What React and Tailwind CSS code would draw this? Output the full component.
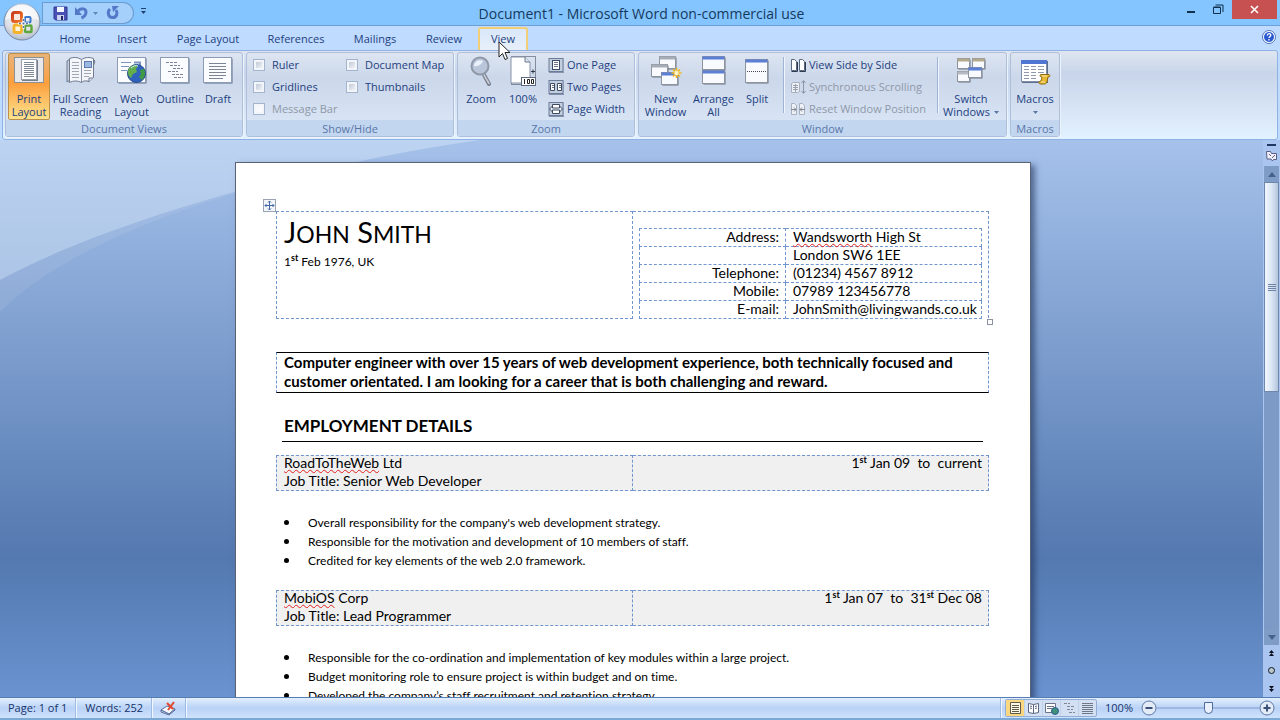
import React from "react";

const TABS = [
  ["Home", "w-[58px]"],
  ["Insert", "w-[56px]"],
  ["Page Layout", "w-[96px]"],
  ["References", "w-[80px]"],
  ["Mailings", "w-[78px]"],
  ["Review", "w-[60px]"],
];

function Sheet({ x = 2, y = 2, w = 28, h = 26 }) {
  return (
    <>
      <rect x={x + 1} y={y + 1} width={w} height={h} fill="#5f6f8a" />
      <rect x={x} y={y} width={w} height={h} fill="#fbfcff" stroke="#8b9ab5" />
    </>
  );
}

function Svg({ children, w = 32, h = 32 }) {
  return (
    <svg width={w} height={h} viewBox={`0 0 ${w} ${h}`} className="shrink-0" aria-hidden="true">
      {children}
    </svg>
  );
}

const PrintIcon = () => (
  <Svg>
    <rect x="1.5" y="3.5" width="29" height="25" fill="#e6e8ec" stroke="#8f9092" />
    <rect x="9" y="6" width="16" height="21" fill="#777f8c" />
    <rect x="8.5" y="5.5" width="15" height="20" fill="#fff" stroke="#98a0ae" />
    <path d="M11 8.500h10M11 10.500h10M11 12.500h10M11 14.500h10M11 16.500h10M11 18.500h10M11 20.500h10M11 22.500h10" stroke="#7f8793" />
  </Svg>
);
const ReadingIcon = () => (
  <Svg>
    <path d="M2 7l3-2v21l-3 2zM30 7l-2-2v18l-5 5z" fill="#c5ccd8" stroke="#6d7a90" />
    <path d="M4.500 4.500c4-1.500 8-1.500 12 1c4-2.500 8-2.500 12-1v19l-4 4c-3-1-6-1-8 1c-4-2-8-2-12 0z" fill="#f4f6fa" stroke="#6d7a90" />
    <path d="M16.500 6v22" stroke="#8490a6" />
    <path d="M7 8.500h7M7 11.500h7M7 14.500h7M7 17.500h7M7 20.500h7M7 23.500h7M19 16.500h7M19 19.500h7M19 22.500h5" stroke="#a0a8b6" />
    <rect x="19.5" y="7.5" width="7" height="6" fill="#9db8e0" stroke="#5a7ab0" />
    <path d="M24 28v-4h4" fill="#dfe5ee" stroke="#6d7a90" />
  </Svg>
);
const WebIcon = () => (
  <Svg>
    <Sheet x={1.5} y={3.5} w={28} h={25} />
    <path d="M5 8.500h10M5 12.500h8M5 16.500h6" stroke="#7d94bf" />
    <path d="M18 8.500h6v3" fill="none" stroke="#7d94bf" strokeWidth="2" />
    <circle cx="20.5" cy="19.5" r="9" fill="#2f62bd" stroke="#244a8c" />
    <path d="M13 14c3-3 7-4 9-2l-2 3 1 3-4 2-2 4c-3-2-4-6-2-10z" fill="#62ae4c" />
    <path d="M24 16l4-1c2 4 1 8-2 11l-3-3 2-3z" fill="#3f9a46" />
    <path d="M15 14c2-2 5-3 7-2" stroke="#d3ecff" fill="none" />
  </Svg>
);
const OutlineIcon = () => (
  <Svg>
    <Sheet x={1.5} y={3.5} w={28} h={25} />
    <path d="M7 8.500h12M11 11.500h10M14 14.500h10M9 17.500h10M13 20.500h12M15 23.500h9" stroke="#7b8597" strokeDasharray="3 1" />
  </Svg>
);
const DraftIcon = () => (
  <Svg>
    <Sheet x={1.5} y={3.5} w={28} h={25} />
    <path d="M7 9.500h17M7 12.500h17M7 15.500h17M7 18.500h17M7 21.500h17M7 24.500h14" stroke="#7d8593" />
  </Svg>
);
const ZoomIcon = () => (
  <Svg>
    <path d="M18 19l6 11" stroke="#7a8090" strokeWidth="4" strokeLinecap="round" />
    <path d="M18.500 20l5.500 9.500" stroke="#c9cdd6" strokeWidth="1.5" strokeLinecap="round" />
    <circle cx="15" cy="12" r="8.5" fill="#b9c6da" stroke="#8f98a8" strokeWidth="2" />
    <path d="M9 12a6 6 0 0 1 9-5c-1 3-5 6-9 5z" fill="#e9f0fa" />
  </Svg>
);
const HundredIcon = () => (
  <Svg>
    <rect x="4.5" y="2.5" width="24" height="28" fill="none" stroke="#30384a" strokeDasharray="1 1" />
    <path d="M4 3h14l5 5v21H4z" fill="#fff" stroke="#8792a6" />
    <path d="M18 3v5h5" fill="#dfe5ef" stroke="#6c788f" />
    <path d="M24 17.500h4M26 15.500v4" stroke="#30384a" />
    <rect x="14.5" y="23.5" width="14" height="8" fill="#fff" stroke="#5c6780" />
    <path d="M17.500 25v5M20.500 25.500h2v4h-2zM24.500 25.500h2v4h-2z" fill="none" stroke="#222" />
  </Svg>
);
const Tile = ({ children }) => (
  <Svg w={16} h={16}>
    <rect x="1" y="1.5" width="14" height="13" fill="#c3cfdf" stroke="#6b7c9a" />
    <path d="M1 15.500h15V2" fill="none" stroke="#8592ac" />
    {children}
  </Svg>
);
const OnePageIcon = () => (
  <Tile>
    <rect x="4.5" y="3.5" width="7" height="9" fill="#fff" stroke="#3d4a63" />
    <path d="M6 5.500h4M6 7.500h4M6 9.500h4" stroke="#6b7486" />
  </Tile>
);
const TwoPagesIcon = () => (
  <Tile>
    <path d="M2.500 4.500h4v7h-4zM9.500 4.500h4v7h-4z" fill="#fff" stroke="#3d4a63" />
    <path d="M4 6.500h2M4 8.500h2M11 6.500h2M11 8.500h2" stroke="#6b7486" />
  </Tile>
);
const PageWidthIcon = () => (
  <Tile>
    <path d="M4.500 3.500h7v9h-7z" fill="#fff" stroke="#3d4a63" />
    <path d="M1.500 8l3-3v2h7V5l3 3-3 3V9h-7v2z" fill="#e9eef7" stroke="#3d4a63" />
  </Tile>
);

function Win({ x, y, w, h, bar = "#5b7fd4" }) {
  return (
    <>
      <rect x={x + 1} y={y + 1} width={w} height={h} fill="#6c7482" />
      <rect x={x} y={y} width={w} height={h} fill="#f9fafd" stroke="#8e949e" />
      <rect x={x} y={y} width={w} height="3" fill={bar} />
    </>
  );
}
const NewWindowIcon = () => (
  <Svg>
    <Win x={9.5} y={2.5} w={16} h={12} bar="#a7adb8" />
    <Win x={1.5} y={10.5} w={16} h={12} bar="#a7adb8" />
    <Win x={11.5} y={18.5} w={16} h={12} />
    <path d="M26.500 14v10M21.500 19h10M23 15.500l7 7M30 15.500l-7 7" stroke="#f2b61c" strokeWidth="1.6" />
    <circle cx="26.5" cy="19" r="2.2" fill="#fff7c8" />
  </Svg>
);
const ArrangeIcon = () => (
  <Svg>
    <Win x={4.5} y={2.5} w={22} h={13} />
    <Win x={4.5} y={16.5} w={22} h={13} />
  </Svg>
);
const SplitIcon = () => (
  <Svg>
    <Win x={4.5} y={5.5} w={22} h={23} />
    <path d="M6 17.500h20" stroke="#40485a" strokeDasharray="1 1" />
  </Svg>
);
const SwitchIcon = () => (
  <Svg>
    <Win x={2.5} y={4.5} w={12} h={10} bar="#b3a98c" />
    <Win x={17.5} y={4.5} w={12} h={10} bar="#b3a98c" />
    <Win x={2.5} y={17.5} w={12} h={10} bar="#b5b9c1" />
    <Win x={13.5} y={13.5} w={13} h={10} />
  </Svg>
);
const MacrosIcon = () => (
  <Svg>
    <rect x="3" y="7" width="26" height="22" fill="#5f6f8a" />
    <rect x="2.5" y="6.5" width="25" height="21" fill="#fff" stroke="#7f8fae" />
    <rect x="2" y="6" width="26" height="4" fill="#4f76d2" />
    <path d="M5 12.500h5M12 12.500h5M19 12.500h6M5 15.500h5M12 15.500h5M19 15.500h6M5 18.500h5M12 18.500h5M19 18.500h6M5 21.500h5M12 21.500h5M5 24.500h5M12 24.500h5" stroke="#8f99ac" />
    <path d="M21.500 20.500h8.500c1.500 1 1 2.500-1 2.500l-1 5c-1 2-2 2-3 2h-4c-2-1-1-3 1-3l1-4c-2 0-2.500-1.500-1.500-2.500z" fill="#e5b733" stroke="#8f6c17" />
    <path d="M23 22h5M22 28h4" stroke="#fbe9a1" />
  </Svg>
);
const SideIcon = () => (
  <Svg w={16} h={16}>
    <path d="M1.500 2.500h3l2 2v9h-5zM9.500 2.500h3l2 2v9h-5z" fill="#fff" stroke="#5a6880" />
    <path d="M7.500 5v9.500h-6M15.500 5v9.500h-6" fill="none" stroke="#2f3b52" />
  </Svg>
);
const SyncIcon = () => (
  <Svg w={16} h={16}>
    <path d="M1.500 4.500l2-1h6v9l-2 1h-6z" fill="#edf0f5" stroke="#a9b0bd" />
    <path d="M3 6.500h5M3 8.500h5M3 10.500h5M5.500 5v8" stroke="#9aa2b1" />
    <path d="M13.500 2v12M11.500 4l2-2.500 2 2.500M11.500 12l2 2.500 2-2.500" fill="none" stroke="#8e96a5" />
  </Svg>
);
const ResetIcon = () => (
  <Svg w={16} h={16}>
    <path d="M1.500 2.500h3l2 2v9h-5zM9.500 2.500h3l2 2v9h-5z" fill="#eef1f6" stroke="#a9b0bd" />
    <path d="M1 8.500h5M4 6.500l2 2-2 2M15 8.500h-5M12 6.500l-2 2 2 2" fill="none" stroke="#7c8492" />
  </Svg>
);

function Group({ label, className, children }) {
  return (
    <section
      aria-label={label}
      className={`flex shrink-0 flex-col overflow-hidden rounded-[3px] border border-[#aebfdb] bg-linear-to-b from-[#dde5f1] via-[#cbd7ea] via-30% to-[#dce9f8] shadow-[1px_1px_0_#eaf3fe] ${className}`}
    >
      <div className="flex flex-1 px-0.5">{children}</div>
      <h2 className="h-4 bg-[#c2d6f0] text-center leading-[17px] text-[#5a76a8]">{label}</h2>
    </section>
  );
}

function Big({ icon, lines, className, active, arrow }) {
  return (
    <button
      type="button"
      aria-pressed={active}
      className={`flex h-[67px] shrink-0 flex-col items-center rounded-[2px] whitespace-nowrap ${
        active
          ? "border border-[#b98f4a] bg-linear-to-b from-[#e8b478] via-[#fb9f3c] via-45% to-[#fde38c]"
          : "border border-transparent"
      } ${className}`}
    >
      {icon}
      <span className="mt-1.5 flex flex-col text-center leading-[13px]">
        {lines.map((l, i) => (
          <span key={l}>
            {l}
            {arrow === "inline" && i === lines.length - 1 && <Caret />}
          </span>
        ))}
      </span>
      {arrow === "below" && (
        <svg width="5" height="3" viewBox="0 0 5 3" className="mt-1.5" aria-hidden="true">
          <path d="M0 0h5L2.500 3z" fill="#5c77a3" />
        </svg>
      )}
    </button>
  );
}

function Caret() {
  return (
    <svg width="5" height="3" viewBox="0 0 5 3" className="mb-0.5 ml-1 inline-block" aria-hidden="true">
      <path d="M0 0h5L2.500 3z" fill="#5c77a3" />
    </svg>
  );
}

function Small({ icon, children, disabled }) {
  return (
    <button
      type="button"
      disabled={disabled}
      className="flex h-[22px] items-center gap-[3px] whitespace-nowrap disabled:text-[#8f98a8]"
    >
      {icon}
      {children}
    </button>
  );
}

function Check({ children, disabled }) {
  return (
    <label className={`flex h-[22px] items-center gap-[7px] whitespace-nowrap ${disabled ? "text-[#8f98a8]" : ""}`}>
      <input
        type="checkbox"
        disabled={disabled}
        className="size-3 shrink-0 appearance-none border border-[#a3b4cc] bg-linear-to-br from-[#b5bfcf] to-[#fcfdff] shadow-[inset_0_0_0_2px_#f2f5fa] checked:bg-[#5b7fd4] disabled:from-[#f2f4f8]"
      />
      {children}
    </label>
  );
}

function Rule() {
  return <div className="my-1 h-14 w-px shrink-0 bg-[#9fb4d4] shadow-[1px_0_0_#eef5ff]" />;
}

function OfficeLogo() {
  return (
    <svg width="38" height="38" viewBox="0 0 38 38" aria-hidden="true">
      <defs>
        <radialGradient id="orb" cx=".5" cy=".3" r=".8">
          <stop offset="0" stopColor="#fdfdfe" />
          <stop offset=".6" stopColor="#dcdfe6" />
          <stop offset="1" stopColor="#9eabc0" />
        </radialGradient>
        <linearGradient id="ember" x1="0" y1="0" x2="1" y2="1">
          <stop offset="0" stopColor="#c93a1c" />
          <stop offset="1" stopColor="#f07a2a" />
        </linearGradient>
      </defs>
      <circle cx="19" cy="19" r="18" fill="url(#orb)" stroke="#7487a5" />
      <path d="M2.500 17a16.500 16.500 0 0 1 33 0c-8-3-25-3-33 0z" fill="#fff" opacity=".6" />
      <rect x="9.5" y="9.5" width="9" height="9" rx="2" fill="#f7e9e2" stroke="url(#ember)" strokeWidth="3" />
      <rect x="22" y="14" width="5.5" height="5.5" rx="1" fill="none" stroke="#3c79c9" strokeWidth="2" />
      <rect x="11" y="22" width="7.5" height="7.5" rx="1.5" fill="#fff6da" stroke="#f4b32a" strokeWidth="2.8" />
      <rect x="22" y="22.5" width="6.5" height="6.5" rx="1" fill="none" stroke="#5ca63b" strokeWidth="2.4" />
      <path d="M15 20.500h11M20.500 15v11" stroke="#fff" strokeWidth="2" />
      <path d="M16 20.500h10M20.500 16v10" stroke="#5a6fa3" strokeWidth="1.5" strokeDasharray="2 1.500" />
    </svg>
  );
}

function TitleBar() {
  return (
    <header className="flex h-[26px] items-start border-b border-[#6f9fd8] bg-[#84c5ff] pr-[3px] pl-1.5">
      <div className="flex h-full flex-1 basis-0 items-start">
        <div className="mt-0.5 ml-9 flex h-[22px] w-[92px] items-center rounded-tl-[4px] rounded-r-full border border-[#6c9bd0] bg-[#a5d0fb] pl-2.5">
          <button type="button" aria-label="Save">
            <svg width="15" height="15" viewBox="0 0 15 15">
              <path d="M1 1h13v13H2.500L1 12.500z" fill="#4a51b5" stroke="#2e3690" />
              <rect x="4" y="1" width="7" height="5" fill="#f4f6ff" />
              <rect x="4" y="9" width="7" height="5" fill="#cdd3ee" />
              <rect x="8" y="10" width="2" height="4" fill="#20285f" />
            </svg>
          </button>
          <button type="button" aria-label="Undo" className="ml-1.5">
            <svg width="15" height="14" viewBox="0 0 15 14">
              <path d="M4 5c3-3.500 8-2.500 8 1 0 3-2 5-4.500 6" fill="none" stroke="#5478c8" strokeWidth="3" />
              <path d="M1 1v8h7z" fill="#5478c8" />
            </svg>
          </button>
          <button type="button" aria-label="Undo history" className="ml-1">
            <svg width="5" height="3" viewBox="0 0 5 3">
              <path d="M0 0h5L2.500 3z" fill="#5b86c0" />
            </svg>
          </button>
          <button type="button" aria-label="Repeat" className="ml-2">
            <svg width="14" height="14" viewBox="0 0 14 14">
              <path d="M4 3C1 6 2 11.500 6.500 11.500S12 7 10 4" fill="none" stroke="#5478c8" strokeWidth="3" />
              <path d="M6 0h7l-6 6z" fill="#5478c8" />
            </svg>
          </button>
        </div>
        <button type="button" aria-label="Customize Quick Access Toolbar" className="mt-2 ml-[7px]">
          <svg width="5" height="6" viewBox="0 0 5 6">
            <path d="M0 .5h5" stroke="#22406e" />
            <path d="M0 3h5L2.500 6z" fill="#22406e" />
          </svg>
        </button>
      </div>
      <h1 className="text-[14px] leading-[27px] whitespace-nowrap text-[#15395c]">
        Document1 - Microsoft Word non-commercial use
      </h1>
      <div className="flex flex-1 basis-0 items-start justify-end">
        <button type="button" aria-label="Minimize" className="flex h-[19px] w-[26px] items-center justify-center">
          <svg width="9" height="9" viewBox="0 0 9 9">
            <path d="M0 7h8" stroke="#0f2f4d" strokeWidth="2" />
          </svg>
        </button>
        <button type="button" aria-label="Restore" className="flex h-[19px] w-[28px] items-center justify-center">
          <svg width="11" height="11" viewBox="0 0 11 11" fill="none" stroke="#0f2f4d">
            <path d="M.5 3.500h7v6h-7zM.5 3h7M2.500 1h7.500v7" />
          </svg>
        </button>
        <button type="button" aria-label="Close" className="flex h-[19px] w-[45px] items-center justify-center bg-[#c75050]">
          <svg width="9" height="9" viewBox="0 0 9 9">
            <path d="M1 1l7 7M8 1L1 8" stroke="#fff" strokeWidth="1.6" />
          </svg>
        </button>
      </div>
    </header>
  );
}

function TabBar() {
  return (
    <nav className="flex h-6 items-end bg-[#bfdbff] pr-1 pl-[46px]">
      <div className="flex flex-1">
        {TABS.map(([label, width]) => (
          <button key={label} type="button" className={`h-[23px] shrink-0 pt-0.5 whitespace-nowrap ${width}`}>
            {label}
          </button>
        ))}
        <button
          type="button"
          aria-current="page"
          className="relative ml-1 h-[23px] w-[50px] rounded-t-[3px] border-x-2 border-t-2 border-[#f0cf78] bg-linear-to-b from-[#d9e8fb] to-[#e8effa]"
        >
          View
          <svg width="14" height="20" viewBox="0 0 14 20" className="absolute top-3 left-[18px] z-20" aria-hidden="true">
            <path d="M1 1v15l3.500-3.500L7 18.500l2.500-1-2.500-6h5z" fill="#fff" stroke="#222" />
          </svg>
        </button>
      </div>
      <button type="button" aria-label="Help" className="mb-1.5">
        <svg width="14" height="14" viewBox="0 0 14 14">
          <circle cx="7" cy="7" r="6.5" fill="#fff" stroke="#4c74c0" />
          <circle cx="7" cy="7" r="5" fill="#2c5bd0" />
          <path d="M5.300 5.500c0-2.400 3.500-2.400 3.500-.3C8.800 6.500 7 6.500 7 8M7 9v1.500" fill="none" stroke="#fff" strokeWidth="1.3" />
        </svg>
      </button>
    </nav>
  );
}

function Ribbon() {
  return (
    <div className="bg-[#bfdbff] px-0.5">
      <div className="flex h-[90px] gap-[3px] rounded-[3px] border border-[#8db2e3] bg-linear-to-b from-[#dfe6f1] via-[#c8d5ea] via-25% to-[#e3f2ff] px-0.5 pt-px pb-0.5">
        <Group label="Document Views" className="w-[238px]">
          <Big active icon={<PrintIcon />} lines={["Print", "Layout"]} className="w-[42px]" />
          <Big icon={<ReadingIcon />} lines={["Full Screen", "Reading"]} className="w-[61px]" />
          <Big icon={<WebIcon />} lines={["Web", "Layout"]} className="w-[41px]" />
          <Big icon={<OutlineIcon />} lines={["Outline"]} className="w-[46px]" />
          <Big icon={<DraftIcon />} lines={["Draft"]} className="w-[40px]" />
        </Group>
        <Group label="Show/Hide" className="w-[208px]">
          <div className="ml-1 flex w-[93px] flex-col pt-px">
            <Check>Ruler</Check>
            <Check>Gridlines</Check>
            <Check disabled>Message Bar</Check>
          </div>
          <div className="flex flex-col pt-px">
            <Check>Document Map</Check>
            <Check>Thumbnails</Check>
          </div>
        </Group>
        <Group label="Zoom" className="w-[178px]">
          <Big icon={<ZoomIcon />} lines={["Zoom"]} className="w-[42px]" />
          <Big icon={<HundredIcon />} lines={["100%"]} className="w-[42px]" />
          <div className="ml-1 flex flex-col pt-px">
            <Small icon={<OnePageIcon />}>One Page</Small>
            <Small icon={<TwoPagesIcon />}>Two Pages</Small>
            <Small icon={<PageWidthIcon />}>Page Width</Small>
          </div>
        </Group>
        <Group label="Window" className="w-[369px]">
          <Big icon={<NewWindowIcon />} lines={["New", "Window"]} className="w-[49px]" />
          <Big icon={<ArrangeIcon />} lines={["Arrange", "All"]} className="w-[47px]" />
          <Big icon={<SplitIcon />} lines={["Split"]} className="mr-1.5 w-[40px]" />
          <Rule />
          <div className="ml-1.5 flex flex-1 flex-col pt-px">
            <Small icon={<SideIcon />}>View Side by Side</Small>
            <Small disabled icon={<SyncIcon />}>Synchronous Scrolling</Small>
            <Small disabled icon={<ResetIcon />}>Reset Window Position</Small>
          </div>
          <Rule />
          <Big icon={<SwitchIcon />} lines={["Switch", "Windows"]} arrow="inline" className="w-[66px]" />
        </Group>
        <Group label="Macros" className="w-[50px]">
          <Big icon={<MacrosIcon />} lines={["Macros"]} arrow="below" className="w-[44px]" />
        </Group>
      </div>
    </div>
  );
}

const DASH = "border-dashed border-[#7196cd]";
const Typo = ({ children }) => (
  <span className="underline decoration-[#e02020] decoration-wavy decoration-1 underline-offset-1 [text-decoration-skip-ink:none]">
    {children}
  </span>
);
const Sup = ({ children }) => <sup className="top-[-5px] text-[9px] leading-none font-bold">{children}</sup>;

const CONTACT = [
  ["Address:", <><Typo>Wandsworth</Typo> High St</>],
  ["", "London SW6 1EE"],
  ["Telephone:", "(01234) 4567 8912"],
  ["Mobile:", "07989 123456778"],
  ["E-mail:", "JohnSmith@livingwands.co.uk"],
];

function Job({ name, title, dates, points }) {
  return (
    <>
      <table className="w-full table-fixed border-collapse bg-[#f0f0f1] text-[14px] leading-[18px]">
        <tbody>
          <tr className="align-top">
            <td className={`border px-[7px] ${DASH}`}>
              <p className="-mt-0.5">{name}</p>
              <p>{title}</p>
            </td>
            <td className={`border px-[6px] text-right whitespace-pre ${DASH}`}>
              <p className="-mt-0.5">{dates}</p>
            </td>
          </tr>
        </tbody>
      </table>
      <ul className="mt-[22px] mb-5 text-[12px] leading-[19px]">
        {points.map((p) => (
          <li key={p} className="flex items-center gap-[19px] pl-2">
            <span className="size-[5px] shrink-0 rounded-full bg-black" />
            {p}
          </li>
        ))}
      </ul>
    </>
  );
}

function Page() {
  return (
    <article className="relative mx-auto mt-[22px] min-h-[1123px] w-full max-w-[796px] border border-[#5b6273] bg-white pt-[48px] pr-[41px] pl-[40px] font-['Lato','Liberation_Sans',sans-serif] text-black shadow-[4px_3px_6px_rgba(30,50,90,0.6)] [font-variant-ligatures:none]">
      <svg width="13" height="13" viewBox="0 0 13 13" className="absolute top-[36px] left-[27px]" aria-hidden="true">
        <rect x=".5" y=".5" width="12" height="12" fill="#f2f5fa" stroke="#9aa3b3" />
        <path d="M6.500 2v9M2 6.500h9M5 3.500l1.500-1.500 1.500 1.500M5 9.500l1.500 1.500 1.500-1.500M3.500 5L2 6.500 3.500 8M9.500 5L11 6.500 9.500 8" fill="none" stroke="#4467a5" />
      </svg>
      <div className="relative">
        <table className="w-full table-fixed border-collapse">
          <tbody>
            <tr className="align-top">
              <td className={`border px-[7px] ${DASH}`}>
                <h2 className="h-[41px] pt-0.5 text-[29px] leading-[36px]">
                  J<span className="text-[23px]">OHN</span> S<span className="text-[23px]">MITH</span>
                </h2>
                <p className="text-[12px] leading-[18px]">
                  1<Sup>st</Sup> Feb 1976, UK
                </p>
              </td>
              <td className={`border-t border-r px-[6px] pt-[16px] ${DASH}`}>
                <table className="-mb-px w-full border-collapse text-[14px] leading-[15px]">
                  <tbody>
                    {CONTACT.map(([k, v], i) => (
                      <tr key={i} className="h-[18px]">
                        <th scope="row" className={`w-[146px] border pr-[6px] pb-0.5 text-right font-normal ${DASH}`}>
                          {k}
                        </th>
                        <td className={`border pb-0.5 pl-[7px] whitespace-nowrap ${DASH}`}>{v}</td>
                      </tr>
                    ))}
                  </tbody>
                </table>
              </td>
            </tr>
          </tbody>
        </table>
        <span className="absolute -right-1 -bottom-1.5 size-1.5 border border-[#8a92a0] bg-white" />
      </div>
      <p className={`mt-[33px] border-x px-[7px] ${DASH} border-y border-y-black [border-block-style:solid] text-[15px] leading-[19px] font-bold pb-px`}>
        Computer engineer with over 15 years of web development experience, both technically focused and customer
        orientated. I am looking for a career that is both challenging and reward.
      </p>
      <h3 className="mx-[6px] mt-[21px] mb-[13px] border-b border-black pb-[3px] pl-0.5 text-[17px] leading-[24px] font-bold">
        EMPLOYMENT DETAILS
      </h3>
      <Job
        name={<><Typo>RoadToTheWeb</Typo> Ltd</>}
        title="Job Title: Senior Web Developer"
        dates={<>1<Sup>st</Sup> Jan 09  to  current</>}
        points={[
          "Overall responsibility for the company's web development strategy.",
          "Responsible for the motivation and development of 10 members of staff.",
          "Credited for key elements of the web 2.0 framework.",
        ]}
      />
      <Job
        name={<><Typo>MobiOS</Typo> Corp</>}
        title="Job Title: Lead Programmer"
        dates={<>1<Sup>st</Sup> Jan 07  to  31<Sup>st</Sup> Dec 08</>}
        points={[
          "Responsible for the co-ordination and implementation of key modules within a large project.",
          "Budget monitoring role to ensure project is within budget and on time.",
          "Developed the company’s staff recruitment and retention strategy.",
        ]}
      />
    </article>
  );
}

function ScrollBar() {
  return (
    <div className="relative flex w-[17px] shrink-0 flex-col items-center bg-[#a9c5f0] pt-1">
      <span className="h-0.5 w-[9px] shrink-0 bg-[#1f3864]" />
      <button type="button" aria-label="View Ruler" className="mt-1 mb-1 shrink-0">
        <svg width="12" height="12" viewBox="0 0 12 12" fill="#f3f0fa" stroke="#5a5f86">
          <path d="M.5 1.500h4l1 2h5v6h-3l-1 1.500-1.500-2h-4z" />
          <path d="M3 4l2 2M6 8l3-3" fill="none" />
        </svg>
      </button>
      <button type="button" aria-label="Scroll up" className="flex h-4 w-[15px] shrink-0 items-center justify-center bg-[#7f9cc6]">
        <svg width="8" height="5" viewBox="0 0 8 5"><path d="M0 5h8L4 0z" fill="#44618f" /></svg>
      </button>
      <div className="w-[15px] flex-1 bg-[#7c9ac5]">
        <div className="flex h-[47%] flex-col items-center justify-center gap-px border border-[#6f87ad] bg-linear-to-r from-[#f0f6fd] via-[#dbe6f4] to-[#b3c5dc]">
          {[0, 1, 2, 3].map((i) => (
            <span key={i} className="h-px w-2 bg-[#6d82a6]" />
          ))}
        </div>
      </div>
      <button type="button" aria-label="Scroll down" className="flex h-4 w-[15px] shrink-0 items-center justify-center bg-[#7f9cc6]">
        <svg width="8" height="5" viewBox="0 0 8 5"><path d="M0 0h8L4 5z" fill="#44618f" /></svg>
      </button>
      <div className="flex h-[52px] shrink-0 flex-col items-center justify-around">
        <button type="button" aria-label="Previous Page">
          <svg width="7" height="7" viewBox="0 0 7 7"><path d="M3.500 0L6 3H1zM3.500 3L6 6H1z" fill="#0a1020" /></svg>
        </button>
        <button type="button" aria-label="Select Browse Object">
          <svg width="7" height="7" viewBox="0 0 7 7"><circle cx="3.5" cy="3.5" r="3" fill="#b9c9c9" stroke="#101828" /></svg>
        </button>
        <button type="button" aria-label="Next Page">
          <svg width="7" height="7" viewBox="0 0 7 7"><path d="M3.500 4L1 1h5zM3.500 7L1 4h5z" fill="#0a1020" /></svg>
        </button>
      </div>
    </div>
  );
}

function Workspace() {
  return (
    <main className="relative flex min-h-0 flex-1 overflow-hidden bg-linear-to-b from-[#a6c2eb] via-[#5479b0] via-75% to-[#6a93d0]">
      <svg width="480" height="172" viewBox="0 0 480 172" className="absolute top-0 left-0" aria-hidden="true">
        <path d="M0 0H480C320 22 90 80 0 172z" fill="#fff" opacity=".08" />
        <path d="M0 0H480C320 22 110 80 0 140z" fill="#d5e6fb" opacity=".4" />
      </svg>
      <div className="min-w-0 flex-1 pl-[3px]">
        <Page />
      </div>
      <ScrollBar />
    </main>
  );
}

const VIEWS = [
  ["Print Layout", <path key="p" d="M2.500 1.500h10v11h-10zM4 4.500h7M4 6.500h7M4 8.500h7M4 10.500h7" fill="#fdf7e4" stroke="#5d5a4a" />],
  ["Full Screen Reading", <path key="p" d="M7.500 3.500v9M7.500 3.500l-5-1v9l5 1 5-1v-9zM4 5l2 .5M4 7l2 .5M9 5.500l2-.5M9 7.500l2-.5" fill="#fff" stroke="#5b6780" />],
  [
    "Web Layout",
    <g key="p">
      <path d="M1.500 2.500h10v9h-10zM3 5.500h7M3 7.500h5" fill="#fff" stroke="#6a7488" />
      <circle cx="11" cy="10" r="3.5" fill="#3f8f7a" stroke="#2b5f94" />
    </g>,
  ],
  ["Outline", <path key="p" d="M2 2.500h6M5 5.500h7M5 8.500h6M7 11.500h6" fill="none" stroke="#7f8899" strokeDasharray="3 1" />],
  ["Draft", <path key="p" d="M2 2.500h11M2 4.500h11M2 6.500h11M2 8.500h11M2 10.500h11M2 12.500h11" fill="none" stroke="#6f7888" />],
];

function Divider() {
  return <span className="h-full w-px bg-[#9dbbe3] shadow-[1px_0_0_#f1f7ff]" />;
}

function StatusBar() {
  return (
    <footer className="flex h-[23px] shrink-0 items-center border-t border-b-2 border-t-[#567db1] border-b-[#7ba9d6] bg-linear-to-b from-[#e3effd] via-[#b9d2f6] via-50% to-[#cfe2fc] text-[#16336b]">
      <span className="px-2">Page: 1 of 1</span>
      <Divider />
      <span className="pr-2 pl-[9px]">Words: 252</span>
      <Divider />
      <button type="button" aria-label="Proofing errors" className="px-2">
        <svg width="17" height="15" viewBox="0 0 17 15">
          <path d="M1 9l6-4 8 3-6 5z" fill="#f4f7fd" stroke="#5c6f9e" />
          <path d="M1 9v2l8 3 6-5V8l-6 5z" fill="#c7d3ea" stroke="#5c6f9e" />
          <path d="M7 2l6 6M14 1L8 9" stroke="#e2472f" strokeWidth="2" />
        </svg>
      </button>
      <Divider />
      <span className="flex-1" />
      <Divider />
      <div className="ml-1 flex h-[18px] rounded-[2px] border border-[#93aed6] bg-[#d3e0f3]">
        {VIEWS.map(([label, art], i) => (
          <button
            key={label}
            type="button"
            aria-label={label}
            aria-pressed={i === 0}
            className={`flex w-[18px] items-center justify-center ${i === 0 ? "bg-[#fbd77f]" : "border-l border-[#c0d1ea]"}`}
          >
            <svg width="15" height="15" viewBox="0 0 15 15">{art}</svg>
          </button>
        ))}
      </div>
      <button type="button" className="w-[44px] text-center">100%</button>
      <button type="button" aria-label="Zoom Out">
        <svg width="16" height="16" viewBox="0 0 16 16">
          <circle cx="8" cy="8" r="7" fill="#e3ebf7" stroke="#5c78a8" />
          <path d="M4.500 8h7" stroke="#3c5078" strokeWidth="2" />
        </svg>
      </button>
      <input
        type="range"
        aria-label="Zoom"
        min="10"
        max="190"
        defaultValue="100"
        className="h-4 w-[102px] appearance-none bg-linear-to-b from-transparent from-45% via-[#6f8cbd] via-50% to-transparent to-55% [&::-webkit-slider-thumb]:h-3 [&::-webkit-slider-thumb]:w-[9px] [&::-webkit-slider-thumb]:appearance-none [&::-webkit-slider-thumb]:rounded-b-[5px] [&::-webkit-slider-thumb]:border [&::-webkit-slider-thumb]:border-[#4f6b9e] [&::-webkit-slider-thumb]:bg-[#e9f0fb]"
      />
      <button type="button" aria-label="Zoom In" className="mr-[5px]">
        <svg width="16" height="16" viewBox="0 0 16 16">
          <circle cx="8" cy="8" r="7" fill="#e3ebf7" stroke="#5c78a8" />
          <path d="M4.500 8h7M8 4.500v7" stroke="#3c5078" strokeWidth="2" />
        </svg>
      </button>
    </footer>
  );
}

export default function App() {
  return (
    <div className="flex h-screen flex-col overflow-hidden font-['Open_Sans','Noto_Sans',sans-serif] text-[11px] text-[#1e3f80]">
      <div className="relative shrink-0">
        <TitleBar />
        <TabBar />
        <Ribbon />
        <button type="button" aria-label="Office Button" className="absolute top-[3px] left-[3px]">
          <OfficeLogo />
        </button>
      </div>
      <Workspace />
      <StatusBar />
    </div>
  );
}
